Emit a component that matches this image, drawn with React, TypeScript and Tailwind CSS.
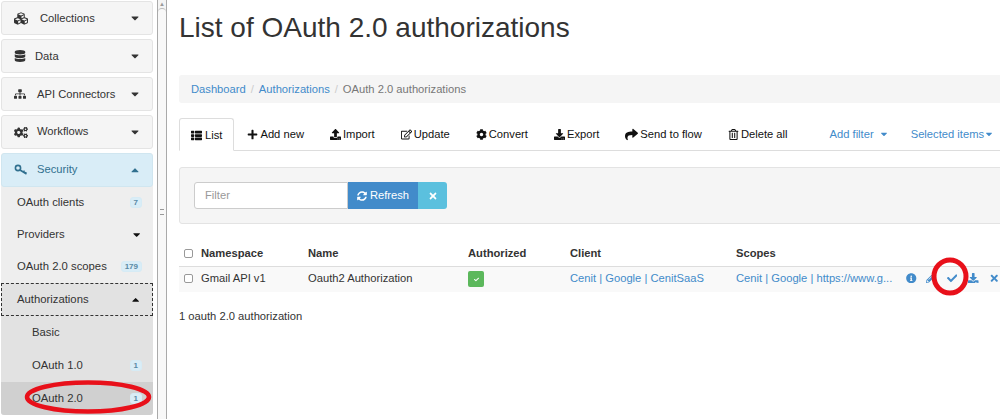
import type { ReactNode } from 'react';
import {
  FaCubes, FaDatabase, FaSitemap, FaCogs, FaCaretDown, FaCaretUp, FaThList, FaPlus, FaUpload,
  FaRegEdit, FaCog, FaDownload, FaShare, FaRegTrashAlt, FaSyncAlt, FaTimes, FaInfoCircle, FaPencilAlt, FaCheck,
} from 'react-icons/fa';

function KeyIcon() {
  return (
    <svg viewBox="0 0 14 12" className="h-[12px] w-[14px]" fill="none" stroke="currentColor" strokeWidth="1.6">
      <circle cx="4" cy="4" r="2.6" />
      <path d="M6 6l6.5 4M9.5 8l1-1.4M11.5 9.4l.8-1.2" />
    </svg>
  );
}

function Section({ icon, label, gap, active }: { icon: ReactNode; label: string; gap: string; active?: boolean }) {
  return (
    <div
      className={`flex h-[34px] items-center rounded-[3px] border pl-[12px] pr-[11px] text-[11.2px] whitespace-nowrap ${
        active ? 'border-[#d0e6f0] bg-[#d9edf7] text-[#31708f]' : 'border-[#e4e4e4] bg-[#f5f5f5] text-[#333]'
      }`}
    >
      <span className="flex w-[14px] justify-start text-[15px]">{icon}</span>
      <span className={gap}>{label}</span>
      <span className="ml-auto text-[12px]">{active ? <FaCaretUp /> : <FaCaretDown />}</span>
    </div>
  );
}

function Badge({ n }: { n: string }) {
  return (
    <span className="rounded-[3px] border border-[#d6ebf5] bg-[#d9edf7] px-[3px] text-[8px] leading-[9px] font-bold text-[#5a8aa5]">
      {n}
    </span>
  );
}

function Item({ label, right, indent = 'pl-[16px]', className = '' }: { label: string; right?: ReactNode; indent?: string; className?: string }) {
  return (
    <div className={`flex h-[33px] items-center pr-[11px] text-[11.3px] whitespace-nowrap text-[#333] ${indent} ${className}`}>
      <span>{label}</span>
      <span className="ml-auto flex items-center">{right}</span>
    </div>
  );
}

function Tab({ icon, label, active }: { icon: ReactNode; label: string; active?: boolean }) {
  return (
    <div
      className={`flex h-[33px] items-center pt-px text-[11.2px] whitespace-nowrap text-[#111] ${
        active ? '-mb-px gap-[3px] rounded-t-[3px] border border-[#ddd] border-b-white bg-white px-[11px]' : 'gap-[2px] px-[13px]'
      }`}
    >
      <span className="text-[11px]">{icon}</span>
      {label}
    </div>
  );
}

export default function App() {
  return (
    <div className="relative flex h-[419px] w-[1000px] overflow-hidden bg-white font-['Liberation_Sans',sans-serif]">
      <aside className="flex w-[153px] shrink-0 flex-col gap-[4px] pt-px pl-px">
        <Section icon={<FaCubes />} label="Collections" gap="ml-[12px]" />
        <Section icon={<FaDatabase className="text-[12px]" />} label="Data" gap="ml-[7px]" />
        <Section icon={<FaSitemap className="text-[12px]" />} label="API Connectors" gap="ml-[9px]" />
        <Section icon={<FaCogs />} label="Workflows" gap="ml-[9px] mb-[2px]" />
        <div className="flex flex-col overflow-hidden rounded-[3px] bg-[#eee]">
          <Section icon={<KeyIcon />} label="Security" gap="ml-[9px] mb-[2px]" active />
          <Item label="OAuth clients" right={<Badge n="7" />} className="-mt-px" />
          <Item label="Providers" right={<FaCaretDown className="text-[#111]" />} className="-mt-px" />
          <Item label="OAuth 2.0 scopes" right={<Badge n="179" />} className="-mt-px" />
          <Item
            label="Authorizations"
            right={<FaCaretUp className="text-[#111]" />}
            indent="pl-[15px]"
            className="border border-dashed border-[#333] bg-[#e2e2e2]"
          />
          <Item label="Basic" indent="pl-[31px]" className="bg-[#e2e2e2]" />
          <Item label="OAuth 1.0" right={<Badge n="1" />} indent="pl-[31px]" className="bg-[#e2e2e2]" />
          <Item label="OAuth 2.0" right={<Badge n="1" />} indent="pl-[31px]" className="bg-[#d0d0d0]" />
        </div>
      </aside>

      <div className="ml-[4px] flex w-[10px] shrink-0 flex-col items-center border-x border-x-[#aaa] bg-[#f4f4f4] text-[#999]">
        <span className="text-[6px] leading-[8px]">▲</span>
        <div className="flex h-[411px] w-full items-center justify-center rounded-t-[4px] border-t border-[#bbb] bg-[#f8f8f8] pb-[4px]">
          <div className="h-[6px] w-[4px] border-y border-[#999]" />
        </div>
      </div>

      <main className="ml-[12px] w-[840px] shrink-0">
        <h1 className="mt-[12px] text-[28px] leading-[32px] font-normal whitespace-nowrap text-[#333]">List of OAuth 2.0 authorizations</h1>

        <nav className="mt-[31px] flex h-[28px] items-center rounded-[3px] bg-[#f5f5f5] px-[12px] text-[11.2px]">
          <span className="text-[#428bca]">Dashboard</span>
          <span className="px-[5px] text-[#ccc]">/</span>
          <span className="text-[#428bca]">Authorizations</span>
          <span className="px-[5px] text-[#ccc]">/</span>
          <span className="text-[#777]">OAuth 2.0 authorizations</span>
        </nav>

        <div className="mt-[15px] flex h-[33px] items-end border-b border-[#ddd]">
          <Tab icon={<FaThList />} label="List" active />
          <Tab icon={<FaPlus />} label="Add new" />
          <Tab icon={<FaUpload />} label="Import" />
          <Tab icon={<FaRegEdit />} label="Update" />
          <Tab icon={<FaCog />} label="Convert" />
          <Tab icon={<FaDownload />} label="Export" />
          <Tab icon={<FaShare className="text-[13px]" />} label="Send to flow" />
          <Tab icon={<FaRegTrashAlt />} label="Delete all" />
          <div className="ml-[29px] flex h-[33px] items-center gap-[5px] pt-px text-[11.2px] whitespace-nowrap text-[#428bca]">
            Add filter <FaCaretDown className="text-[10px]" />
          </div>
          <div className="ml-[22px] flex h-[33px] items-center pt-px text-[11.2px] whitespace-nowrap text-[#428bca]">
            Selected items <FaCaretDown className="text-[10px]" />
          </div>
        </div>

        <div className="mt-[16px] flex h-[57px] items-center rounded-[3px] border border-[#e3e3e3] bg-[#f5f5f5] px-[14px]">
          <div className="flex h-[27px] w-[154px] items-center rounded-l-[3px] border border-[#ccc] bg-white px-[10px] text-[11.2px] text-[#999]">
            Filter
          </div>
          <div className="flex h-[27px] w-[70px] items-center justify-center gap-[3px] bg-[#428bca] text-[11.2px] text-white">
            <FaSyncAlt className="text-[10px]" />
            Refresh
          </div>
          <div className="flex h-[27px] w-[29px] items-center justify-center rounded-r-[3px] bg-[#5bc0de] text-[10px] text-white">
            <FaTimes />
          </div>
        </div>

        <div className="mt-[16px] flex h-[26px] items-center pt-px text-[11.2px] font-bold text-[#333]">
          <span className="ml-[5px] h-[9px] w-[9px] rounded-[2px] border border-[#999] bg-white" />
          <span className="ml-[8px] w-[107px]">Namespace</span>
          <span className="w-[160px]">Name</span>
          <span className="w-[102px]">Authorized</span>
          <span className="w-[166px]">Client</span>
          <span>Scopes</span>
        </div>
        <div className="flex h-[26px] items-center border-t border-[#ddd] bg-[#f9f9f9] pb-[3px] text-[11.2px] whitespace-nowrap text-[#333]">
          <span className="ml-[5px] h-[9px] w-[9px] rounded-[2px] border border-[#999] bg-white" />
          <span className="ml-[8px] w-[107px]">Gmail API v1</span>
          <span className="w-[160px]">Oauth2 Authorization</span>
          <span className="w-[102px]">
            <span className="mt-[2px] flex h-[16px] w-[16px] items-center justify-center rounded-[2px] bg-[#5cb85c] text-[5px] text-white">
              <FaCheck />
            </span>
          </span>
          <span className="w-[166px] text-[#428bca]">Cenit | Google | CenitSaaS</span>
          <span className="w-[170px] text-[#428bca]">Cenit | Google | https://www.g...</span>
          <span className="flex items-center text-[10.5px] text-[#428bca]">
            <FaInfoCircle />
            <FaPencilAlt className="ml-[9px] text-[10px]" />
            <FaCheck className="ml-[11px]" />
            <FaDownload className="ml-[11px]" />
            <FaTimes className="ml-[10px]" />
          </span>
        </div>

        <p className="mt-[16px] text-[11.2px] text-[#333]">1 oauth 2.0 authorization</p>
      </main>

      <svg className="absolute top-[378px] left-[22px] h-[38px] w-[132px]" viewBox="0 0 132 38" fill="none">
        <ellipse cx="66" cy="19" rx="61" ry="14.5" stroke="#e8101a" strokeWidth="4.5" />
      </svg>
      <svg className="absolute top-[255px] left-[928px] h-[44px] w-[44px]" viewBox="0 0 44 44" fill="none">
        <ellipse cx="22" cy="21.5" rx="16" ry="16.5" stroke="#e8101a" strokeWidth="5" />
      </svg>
    </div>
  );
}
